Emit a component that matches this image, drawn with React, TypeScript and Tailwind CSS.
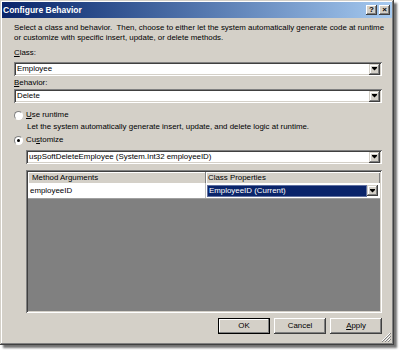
import React from "react";

const font = { fontFamily: '"Liberation Sans", Arial, sans-serif' };

function DropBtn() {
  return (
    <div className="w-[11px] h-[11px] bg-[#d4d0c8] shadow-[inset_-1px_-1px_#404040,inset_1px_1px_#d4d0c8,inset_-2px_-2px_#808080,inset_2px_2px_#ffffff] flex items-center justify-center">
      <svg width="5" height="4" viewBox="0 0 5 4">
        <rect x="0" y="0" width="5" height="1" fill="#000" />
        <path d="M0 1 H5 L2.5 3.5 Z" fill="#000" />
      </svg>
    </div>
  );
}

function Combo({ text, className = "" }: { text: string; className?: string }) {
  return (
    <div
      className={
        "h-[14px] bg-white flex items-center pl-[2px] pr-[2px] shadow-[inset_1px_1px_#808080,inset_-1px_-1px_#ffffff,inset_2px_2px_#404040,inset_-2px_-2px_#d4d0c8] " +
        className
      }
    >
      <span className="flex-1 pl-[1px] text-[7.9px] leading-none text-black">{text}</span>
      <DropBtn />
    </div>
  );
}

function Radio({ checked }: { checked?: boolean }) {
  return (
    <div className="w-[9px] h-[9px] rounded-full border border-t-[#808080] border-l-[#808080] border-b-white border-r-white bg-white flex items-center justify-center">
      {checked && <div className="w-[3px] h-[3px] rounded-full bg-black" />}
    </div>
  );
}

function Btn({ children, def }: { children: React.ReactNode; def?: boolean }) {
  return (
    <div
      className={
        "w-[52px] h-[16px] bg-[#d4d0c8] flex items-center justify-center text-[7.9px] text-black " +
        (def
          ? "border border-black shadow-[inset_-1px_-1px_#808080,inset_1px_1px_#ffffff]"
          : "shadow-[inset_-1px_-1px_#404040,inset_1px_1px_#ffffff,inset_-2px_-2px_#808080]")
      }
    >
      {children}
    </div>
  );
}

export default function App() {
  return (
    <div className="w-[399px] h-[350px] bg-white" style={font}>
      <div className="w-[394px] h-[345px] bg-[#d4d0c8] p-[2px] flex flex-col shadow-[inset_-1px_-1px_#404040,inset_1px_1px_#d4d0c8,inset_-2px_-2px_#808080,inset_2px_2px_#ffffff,3px_3px_2px_rgba(0,0,0,0.55)] relative">
        {/* Title bar */}
        <div className="h-[16px] bg-gradient-to-r from-[#0a246a] to-[#a6caf0] flex items-center pl-[1px] pr-[2px]">
          <span className="flex-1 text-white font-bold text-[8.5px] leading-none">Configure Behavior</span>
          <div className="flex gap-[2px]">
            <div className="w-[11px] h-[10px] bg-[#d4d0c8] shadow-[inset_-1px_-1px_#404040,inset_1px_1px_#ffffff,inset_-2px_-2px_#808080] flex items-center justify-center text-[8px] font-bold leading-none text-black">?</div>
            <div className="w-[11px] h-[10px] bg-[#d4d0c8] shadow-[inset_-1px_-1px_#404040,inset_1px_1px_#ffffff,inset_-2px_-2px_#808080] flex items-center justify-center text-[8px] font-bold leading-none text-black">×</div>
          </div>
        </div>

        <div className="flex flex-col pl-[12px] pr-[10px] text-[7.9px] text-black">
          <div className="mt-[5px] leading-[10px] whitespace-nowrap">
            Select a class and behavior.&nbsp; Then, choose to either let the system automatically generate code at runtime
            <br />
            or customize with specific insert, update, or delete methods.
          </div>
          <div className="mt-[5px] h-[10px] leading-[10px]">
            <span className="underline">C</span>lass:
          </div>
          <Combo text="Employee" className="mt-[4px]" />
          <div className="mt-[2px] h-[10px] leading-[10px]">
            <span className="underline">B</span>ehavior:
          </div>
          <Combo text="Delete" className="mt-[1px]" />

          <div className="mt-[7px] h-[10px] flex items-center gap-[3px]">
            <Radio />
            <span>
              <span className="underline">U</span>se runtime
            </span>
          </div>
          <div className="mt-[2px] h-[10px] leading-[10px] pl-[13px]">
            Let the system automatically generate insert, update, and delete logic at runtime.
          </div>
          <div className="mt-[3px] h-[10px] flex items-center gap-[3px]">
            <Radio checked />
            <span>
              Cu<span className="underline">s</span>tomize
            </span>
          </div>

          <Combo text="uspSoftDeleteEmployee (System.Int32 employeeID)" className="mt-[5px] ml-[12px]" />

          {/* Grid */}
          <div className="mt-[6px] ml-[12px] h-[143px] bg-[#808080] p-[2px] shadow-[inset_1px_1px_#808080,inset_-1px_-1px_#ffffff,inset_2px_2px_#404040,inset_-2px_-2px_#d4d0c8] flex flex-col">
            <div className="h-[11px] flex bg-[#d4d0c8]">
              <div className="w-[178px] h-full pl-[4px] flex items-center border-r border-[#808080] shadow-[inset_1px_1px_#ffffff]">
                Method Arguments
              </div>
              <div className="flex-1 h-full pl-[2px] flex items-center shadow-[inset_1px_1px_#ffffff,inset_-1px_0_#808080]">
                Class Properties
              </div>
            </div>
            <div className="h-[16px] flex bg-white border-b border-[#a0a0a0]">
              <div className="w-[178px] h-full pl-[2px] flex items-center border-r border-[#c0c0c0]">employeeID</div>
              <div className="flex-1 h-full flex items-center pl-[1px] pr-[2px]">
                <div className="flex-1 h-[12px] bg-[#0a246a] text-white flex items-center pl-[1px] border border-[#6070a0]">
                  EmployeeID (Current)
                </div>
                <DropBtn />
              </div>
            </div>
            <div className="flex-1" />
          </div>

          {/* Buttons */}
          <div className="mt-[5px] flex justify-end gap-[4px] pr-[0px]">
            <Btn def>OK</Btn>
            <Btn>Cancel</Btn>
            <Btn>
              <span>
                <span className="underline">A</span>pply
              </span>
            </Btn>
          </div>
        </div>

        {/* size grip */}
        <svg className="absolute right-[3px] bottom-[3px]" width="10" height="10" viewBox="0 0 10 10">
          <path d="M9 1 L1 9 M9 4 L4 9 M9 7 L7 9" stroke="#ffffff" strokeWidth="1" />
          <path d="M10 1 L1 10 M10 4 L4 10 M10 7 L7 10" stroke="#808080" strokeWidth="1" />
        </svg>
      </div>
    </div>
  );
}
